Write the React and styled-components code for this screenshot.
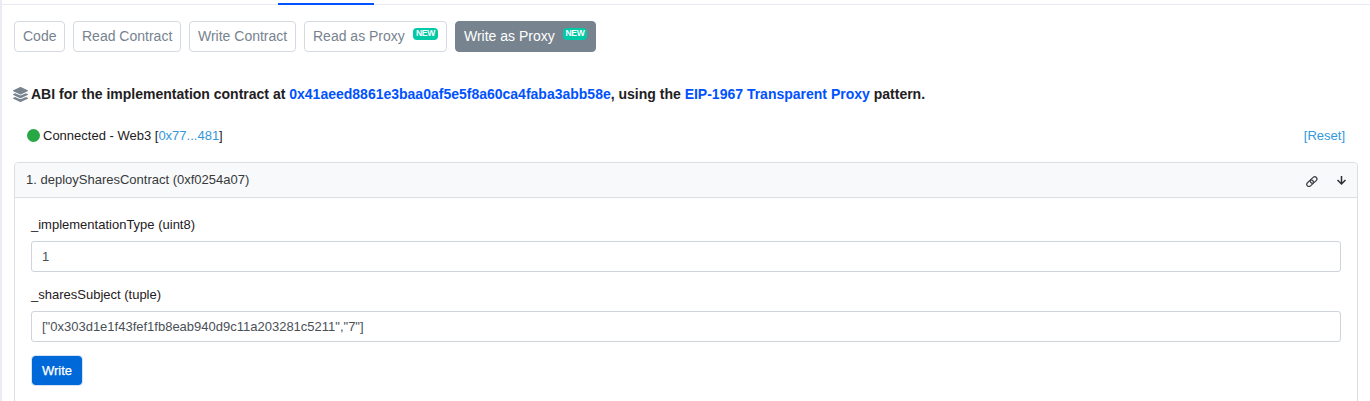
import React from "react";
import styled, { createGlobalStyle } from "styled-components";
import { FaLayerGroup } from "react-icons/fa";

const GlobalStyle = createGlobalStyle`
  *, *::before, *::after { box-sizing: border-box; }
  body {
    margin: 0;
    background: #fff;
    color: #1e2022;
    font: 13px/20px "Liberation Sans", Arial, sans-serif;
    overflow: hidden;
  }
`;

const Panel = styled.main`
  height: 401px;
  border-left: 2px solid #ebecf3;
  overflow: hidden;
`;

const TabLine = styled.div`
  height: 5px;
  border-bottom: 1px solid #e7eaf3;
  padding-left: 276px;
`;

const ActiveTab = styled.div`
  width: 96px;
  height: 5px;
  border-bottom: 2px solid #0052ff;
`;

const Body = styled.div`
  padding: 16px 12px 0;
`;

const Pills = styled.nav`
  display: flex;
  gap: 8px;
`;

const Pill = styled.button`
  display: flex;
  align-items: flex-start;
  justify-content: space-between;
  width: ${(p) => p.$width}px;
  height: 31px;
  padding: 4px 8px 0;
  border: 1px solid ${(p) => (p.$active ? "#77838f" : "#d5dae2")};
  border-radius: 4px;
  background: ${(p) => (p.$active ? "#77838f" : "#fff")};
  color: ${(p) => (p.$active ? "#fff" : "#77838f")};
  font: 14px/21px "Liberation Sans", Arial, sans-serif;
  white-space: nowrap;
`;

const Badge = styled.span`
  width: ${(p) => (p.$narrow ? 24 : 25)}px;
  height: 12px;
  margin-top: 2px;
  border-radius: 4px;
  background: #00c9a7;
  color: #fff;
  font-size: 8.5px;
  font-weight: 700;
  line-height: 11px;
  letter-spacing: -0.3px;
  text-align: center;
`;

const Heading = styled.h1`
  display: flex;
  align-items: center;
  height: 20px;
  margin: 32px 0 0;
  font-size: 14px;
  font-weight: 700;
  white-space: pre;

  svg { margin: 0 3px 0 -1px; color: #77838f; }
`;

const StrongLink = styled.a`
  color: #0052ff;
`;

const Link = styled.a`
  color: #3498db;
`;

const StatusRow = styled.div`
  display: flex;
  justify-content: space-between;
  margin-top: 22px;
  padding: 0 13px;
`;

const Status = styled.div`
  display: flex;
  align-items: center;
`;

const Dot = styled.span`
  width: 13px;
  height: 13px;
  margin: -2px 3px 0 0;
  border-radius: 50%;
  background: #28a745;
`;

const Card = styled.section`
  height: 260px;
  margin-top: 16px;
  border: 1px solid #dcdee0;
  border-radius: 4px;
`;

const CardHeader = styled.header`
  display: flex;
  justify-content: space-between;
  height: 35px;
  padding: 7px 10px 0 11px;
  border-bottom: 1px solid #dcdee0;
  border-radius: 3px 3px 0 0;
  background: #f8f9fb;
  color: #37393b;
`;

const Actions = styled.div`
  display: flex;
  gap: 18px;
  padding-top: 5px;
`;

const Form = styled.div`
  padding: 17px 16px 0;
`;

const Label = styled.label`
  display: block;
  height: 26px;
`;

const Input = styled.input`
  display: block;
  width: 100%;
  height: 31px;
  margin-bottom: 13px;
  padding: 0 10px;
  border: 1px solid #ced3dc;
  border-radius: 3px;
  background: #fff;
  color: #495057;
  font: 13px "Liberation Sans", Arial, sans-serif;
`;

const WriteButton = styled.button`
  display: block;
  width: 52px;
  height: 31px;
  padding: 0;
  border: 1px solid #d5e3f5;
  border-radius: 4px;
  background: #0069d9;
  background-clip: padding-box;
  color: #fff;
  font: 13px "Liberation Sans", Arial, sans-serif;
  -webkit-text-stroke: 0.25px #fff;
`;

const LinkIcon = () => (
  <svg width="12" height="12" viewBox="0 0 12 12" fill="none" stroke="#3a3d40" strokeWidth="1.2">
    <g transform="rotate(-43 6 6.5)">
      <rect x="-0.3" y="4.3" width="7.4" height="4.4" rx="2.2" />
      <rect x="4.5" y="4.3" width="7.4" height="4.4" rx="2.2" />
    </g>
  </svg>
);

const ArrowIcon = () => (
  <svg width="11" height="12" viewBox="0 0 11 12" fill="none" stroke="#2c2f32" strokeWidth="1.5">
    <path d="M5.5 1v8M1.5 5l4 4 4-4" />
  </svg>
);

const tabs = [
  { label: "Code", width: 51 },
  { label: "Read Contract", width: 108 },
  { label: "Write Contract", width: 107 },
  { label: "Read as Proxy", width: 143, isNew: true },
  { label: "Write as Proxy", width: 141, isNew: true, active: true },
];

export default function App() {
  return (
    <>
      <GlobalStyle />
      <Panel>
        <TabLine><ActiveTab /></TabLine>
        <Body>
          <Pills>
            {tabs.map((t) => (
              <Pill key={t.label} $width={t.width} $active={t.active}>
                {t.label}
                {t.isNew && <Badge $narrow={t.active}>NEW</Badge>}
              </Pill>
            ))}
          </Pills>
          <Heading>
            <FaLayerGroup size={15} />
            <span>
              ABI for the implementation contract at{" "}
              <StrongLink>0x41aeed8861e3baa0af5e5f8a60ca4faba3abb58e</StrongLink>, using the{" "}
              <StrongLink>EIP-1967 Transparent Proxy</StrongLink> pattern.
            </span>
          </Heading>
          <StatusRow>
            <Status>
              <Dot />
              <span>Connected - Web3 [<Link>0x77...481</Link>]</span>
            </Status>
            <Link>[Reset]</Link>
          </StatusRow>
          <Card>
            <CardHeader>
              <span>1. deploySharesContract (0xf0254a07)</span>
              <Actions>
                <LinkIcon />
                <ArrowIcon />
              </Actions>
            </CardHeader>
            <Form>
              <Label htmlFor="type">_implementationType (uint8)</Label>
              <Input id="type" defaultValue="1" />
              <Label htmlFor="subject">_sharesSubject (tuple)</Label>
              <Input id="subject" defaultValue={'["0x303d1e1f43fef1fb8eab940d9c11a203281c5211","7"]'} />
              <WriteButton>Write</WriteButton>
            </Form>
          </Card>
        </Body>
      </Panel>
    </>
  );
}
